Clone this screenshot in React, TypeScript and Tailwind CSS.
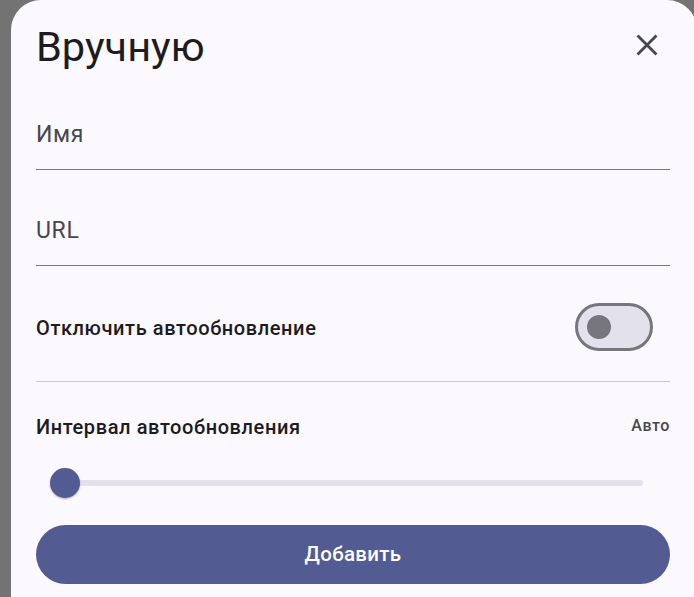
import React from "react"

const font = { fontFamily: "Roboto, 'Noto Sans', sans-serif" }

function CloseIcon() {
  return (
    <svg width="22" height="22" viewBox="0 0 22 22" fill="none">
      <path d="M1.5 1.5 L20.5 20.5 M20.5 1.5 L1.5 20.5" stroke="#45464f" strokeWidth="2.8" />
    </svg>
  )
}

function Field({ label, pt, pb }: { label: string; pt: string; pb: string }) {
  return (
    <div className={`${pt} ${pb} border-b border-[#77767f]`}>
      <div className="h-[28px] text-[23px] leading-[28px] tracking-[0.7px] text-[#46464f]">{label}</div>
    </div>
  )
}

export default function App() {
  return (
    <div className="h-[597px] w-[694px] overflow-hidden bg-[#737373]" style={font}>
      <div className="ml-[11px] h-[640px] w-[686px] rounded-t-[30px] bg-[#fbf8fe] pl-[25px]">
        <div className="w-[634px] pt-[23px]">
          <div className="flex h-[48px] items-center justify-between">
            <h1 className="text-[41.5px] leading-[48px] text-[#1b1b21]">Вручную</h1>
            <button className="-mt-[5px] mr-[12px] flex h-[22px] w-[22px] items-center justify-center">
              <CloseIcon />
            </button>
          </div>

          <Field label="Имя" pt="pt-[50px]" pb="pb-[20px]" />
          <Field label="URL" pt="pt-[47px]" pb="pb-[20px]" />

          <div className="mt-[37px] flex h-[48px] items-center justify-between">
            <span className="mt-[2px] text-[20px] font-medium leading-[24px] tracking-[0.6px] text-[#1b1b21]">
              Отключить автообновление
            </span>
            <div className="mr-[17px] flex h-[48px] w-[78px] items-center rounded-full border-[3px] border-[#77767f] bg-[#e3e1ec] pl-[9px]">
              <div className="h-[24px] w-[24px] rounded-full bg-[#77767f]" />
            </div>
          </div>

          <div className="mt-[30px] h-px bg-[#cbc9d2]" />

          <div className="mt-[33px] flex h-[24px] items-center justify-between">
            <span className="text-[20px] font-medium leading-[24px] tracking-[0.6px] text-[#1b1b21]">
              Интервал автообновления
            </span>
            <span className="-mt-[2px] text-[16px] font-medium leading-[20px] tracking-[0.6px] text-[#46464f]">Авто</span>
          </div>

          <div className="relative mt-[29px] flex h-[30px] items-center pl-[29px] pr-[27px]">
            <div className="h-[6px] w-full rounded-full bg-[#e4e1ec]" />
            <div className="absolute left-[14px] top-0 h-[30px] w-[30px] rounded-full bg-[#535b93] shadow-[0_1px_2px_rgba(0,0,0,0.3)]" />
          </div>

          <button className="mt-[27px] flex h-[59px] w-full items-center justify-center rounded-full bg-[#535b93] text-[20.5px] font-medium tracking-[0.3px] text-white">
            Добавить
          </button>
        </div>
      </div>
    </div>
  )
}
